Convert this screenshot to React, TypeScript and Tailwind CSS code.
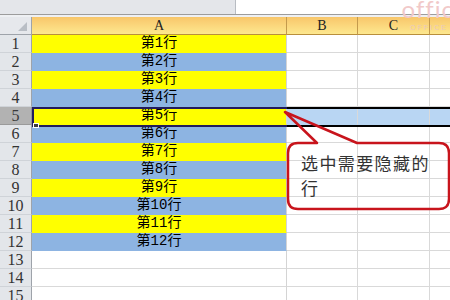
import React from 'react';

const rows = Array.from({ length: 15 }, (_, i) => i + 1);

function RowCells({ n }: { n: number }) {
  const filled = n <= 12;
  const selected = n === 5;
  const aFill = !filled ? 'bg-white border-b-[#d9d9d9]' : n % 2 === 1 ? 'bg-[#ffff00] border-b-[#ffff00]' : 'bg-[#8db4e2] border-b-[#8db4e2]';
  const rest = selected ? 'bg-[#b9d6f3] border-b-[#b9d6f3]' : 'bg-white border-b-[#d9d9d9]';

  return (
    <>
      <div
        className={
          selected
            ? 'flex items-center justify-center border-r border-b border-r-[#8f949b] border-b-[#9a9a9a] bg-[#b2b2b2] text-[#3a3a3a]'
            : 'flex items-center justify-center border-r border-b border-r-[#9ea3aa] border-b-[#cfd3d8] bg-[#e3e6ea] text-[#333]'
        }
        style={{ fontFamily: '"Liberation Serif", serif', fontSize: 16 }}
      >
        {n}
      </div>
      <div
        className={`flex items-center justify-center border-r border-b border-r-[#d4d4d4] text-[14px] text-black ${aFill}`}
        style={{ fontFamily: '"Liberation Mono", "Noto Sans CJK SC", monospace' }}
      >
        {filled ? `第${n}行` : ''}
      </div>
      <div className={`border-r border-b border-r-[#d9d9d9] ${rest}`} />
      <div className={`border-r border-b border-r-[#d9d9d9] ${rest}`} />
      <div className={`border-b ${rest}`} />
    </>
  );
}

export default function App() {
  return (
    <div className="relative w-[450px] h-[300px] overflow-hidden bg-white">
      {/* formula bar strip */}
      <div className="flex h-[14px] bg-[#e4e6ea]">
        <div className="w-[235px]" />
        <div className="flex-1 bg-white border-l border-[#b8bcc2]" />
      </div>
      <div className="h-px bg-[#9c9c9c]" />
      <div className="h-[2px] bg-[#eef0f3]" />

      {/* sheet */}
      <div className="relative grid grid-cols-[32px_255px_71px_72px_1fr] auto-rows-[18px]">
        {/* header row */}
        <div className="relative border-r border-b border-r-[#9ea3aa] border-b-[#9ea3aa] bg-[#e6e8ec]">
          <div className="absolute right-[4px] bottom-[3px] w-0 h-0 border-l-[9px] border-l-transparent border-b-[9px] border-b-[#b9bec5]" />
        </div>
        {['A', 'B', 'C', ''].map((c, i) => (
          <div
            key={i}
            className={`flex items-center justify-center bg-gradient-to-b from-[#f8c66a] to-[#fde88f] border-b border-b-[#b98f3c] text-[14px] text-[#222] ${i < 3 ? 'border-r border-r-[#c49a4c]' : ''}`}
            style={{ fontFamily: '"Liberation Serif", serif' }}
          >
            {c}
          </div>
        ))}

        {rows.map((n) => (
          <RowCells key={n} n={n} />
        ))}

        {/* row 5 selection outline */}
        <div className="absolute left-[32px] top-[90px] w-[255px] h-[20px] border-y-2 border-l-2 border-[#221c5c]" />
        <div className="absolute left-[287px] right-0 top-[90px] h-[20px] border-y-2 border-black" />
        <div className="absolute left-[33px] top-[106px] w-[6px] h-[5px] bg-[#3c3c3c] border border-white" />
      </div>

      {/* watermark */}
      <div className="absolute right-[-4px] top-[-3px] text-[24px] leading-none text-[#f1c9c9] tracking-[1px]" style={{ fontFamily: 'Lato, sans-serif' }}>
        offic
      </div>
      <div className="absolute left-[410px] top-[24px] text-[7px] leading-none text-[#e9c8c0] tracking-[2px]" style={{ fontFamily: '"Liberation Sans", sans-serif' }}>
        OFFICE
      </div>

      {/* callout */}
      <svg className="absolute left-[280px] top-[105px]" width="170" height="110" viewBox="0 0 170 110">
        <path
          d="M18 38 L37 38 L5 7 L77 38 L159 38 Q169 38 169 48 L169 94 Q169 104 159 104 L18 104 Q8 104 8 94 L8 48 Q8 38 18 38 Z"
          fill="none"
          stroke="#c8141c"
          strokeWidth="2.5"
          strokeLinejoin="round"
        />
      </svg>
      <div
        className="absolute left-[301px] top-[150px] w-[140px] text-[17px] leading-[25px] tracking-[1.4px] text-[#333]"
        style={{ fontFamily: '"Noto Sans CJK SC", sans-serif' }}
      >
        选中需要隐藏的行
      </div>
    </div>
  );
}
